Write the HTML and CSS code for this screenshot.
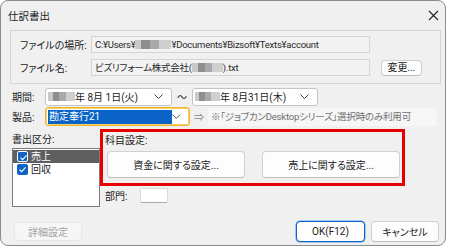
FILE: index.html
```html
<!DOCTYPE html>
<html lang="ja">
<head>
    <meta charset="UTF-8">
    <title>仕訳書出</title>
    <link rel="stylesheet" href="styles.css">
</head>
<body>
    <div class="window">
        <div class="titlebar">
            <span class="title">仕訳書出</span>
            <svg class="close" width="11" height="11" viewBox="0 0 11 11">
                <path d="M1 1 L10 10 M10 1 L1 10" stroke="#222" stroke-width="1.1" fill="none"/>
            </svg>
        </div>

        <div class="filebox">
            <div class="file-row">
                <span class="file-label">ファイルの場所:</span>
                <div class="field">C:¥Users¥<span class="mosaic m1"></span>¥Documents¥Bizsoft¥Texts¥account</div>
            </div>
            <div class="file-row">
                <span class="file-label">ファイル名:</span>
                <div class="field">ビズリフォーム株式会社(<span class="mosaic m2"></span>).txt</div>
                <button class="btn small">変更...</button>
            </div>
        </div>

        <div class="row period">
            <span class="row-label">期間:</span>
            <div class="combo c-from"><span class="mosaic m3"></span>年 8月 1日(火)<svg class="chev" width="9" height="5" viewBox="0 0 9 5"><path d="M0.5 0.5 L4.5 4.5 L8.5 0.5" stroke="#444" fill="none"/></svg></div>
            <span class="tilde">〜</span>
            <div class="combo c-to"><span class="mosaic m4"></span>年 8月31日(木)<svg class="chev" width="9" height="5" viewBox="0 0 9 5"><path d="M0.5 0.5 L4.5 4.5 L8.5 0.5" stroke="#444" fill="none"/></svg></div>
        </div>

        <div class="row product">
            <span class="row-label">製品:</span>
            <div class="combo focus"><span class="selected">勘定奉行21</span><svg class="chev" width="9" height="5" viewBox="0 0 9 5"><path d="M0.5 0.5 L4.5 4.5 L8.5 0.5" stroke="#444" fill="none"/></svg></div>
            <span class="arrow">⇒</span>
            <div class="note">※「ジョブカンDesktopシリーズ」選択時のみ利用可</div>
        </div>

        <div class="main">
            <div class="left">
                <div class="list-label">書出区分:</div>
                <div class="listbox">
                    <div class="item active"><span class="check"></span>売上</div>
                    <div class="item"><span class="check"></span>回収</div>
                </div>
            </div>
            <div class="right">
                <div class="highlight">
                    <div class="kamoku-label">科目設定:</div>
                    <div class="kamoku-buttons">
                        <button class="btn big">資金に関する設定...</button>
                        <button class="btn big">売上に関する設定...</button>
                    </div>
                </div>
                <div class="dept">
                    <span class="dept-label">部門:</span>
                    <div class="dept-input"></div>
                </div>
            </div>
        </div>

        <div class="footer">
            <button class="btn detail" disabled>詳細設定</button>
            <button class="btn ok">OK(F12)</button>
            <button class="btn cancel">キャンセル</button>
        </div>
    </div>
</body>
</html>
```

FILE: styles.css
```css
body {
    margin: 0;
    background-color: #ffffff;
    font-family: Roboto, 'Noto Sans CJK JP', sans-serif;
    font-size: 10px;
    font-feature-settings: "palt";
    color: #1b1b1b;
}
.window {
    box-sizing: border-box;
    width: 446px;
    height: 246px;
    border: 1px solid #8c8c8c;
    border-radius: 8px;
    background-color: #f0f0f0;
    overflow: hidden;
}
.titlebar {
    height: 29px;
    display: flex;
    align-items: center;
    justify-content: space-between;
    padding: 0 6px 0 7px;
}
.title {
    font-size: 10.5px;
}
.filebox {
    box-sizing: border-box;
    margin-left: 9px;
    width: 431px;
    height: 54px;
    border: 1px solid #d6d6d6;
    padding: 5px 0 0 9px;
}
.file-row {
    display: flex;
    align-items: center;
    height: 17px;
    margin-bottom: 6px;
}
.file-label {
    width: 71px;
}
.field {
    box-sizing: border-box;
    width: 279px;
    height: 17px;
    border: 1px solid #d4d4d4;
    background-color: #f2f2f2;
    padding-left: 3px;
    font-size: 9.5px;
    letter-spacing: -0.25px;
    line-height: 15px;
    white-space: nowrap;
    overflow: hidden;
    color: #2a2a2a;
}
.mosaic {
    display: inline-block;
    height: 9px;
    vertical-align: -1px;
    background: linear-gradient(90deg, #c9c9c9 0 18%, #8e8e8e 18% 42%, #a9a9a9 42% 66%, #cfcfcf 66% 100%);
}
.m1 { width: 36px; }
.m2 { width: 31px; }
.m3 { width: 27px; }
.m4 { width: 25px; }
.btn {
    box-sizing: border-box;
    font-family: inherit;
    font-size: 10px;
    font-feature-settings: "palt";
    color: #1b1b1b;
    background-color: #fdfdfd;
    border: 1px solid #d0d0d0;
    border-bottom-color: #bdbdbd;
    border-radius: 4px;
    padding: 0;
}
.btn.small {
    width: 41px;
    height: 16px;
    margin-left: 11px;
    line-height: 14px;
}
.row {
    display: flex;
    align-items: center;
    height: 19px;
    padding-left: 11px;
}
.period {
    margin-top: 3px;
}
.product {
    margin-top: 1px;
}
.row-label {
    width: 33px;
}
.combo {
    box-sizing: border-box;
    height: 18px;
    background-color: #ffffff;
    border: 1px solid #c4c4c4;
    border-radius: 3px;
    display: flex;
    align-items: center;
    padding: 0 8px 0 2px;
    white-space: nowrap;
}
.combo .chev {
    margin-left: auto;
}
.c-from {
    width: 127px;
}
.c-to {
    width: 126px;
}
.tilde {
    width: 20px;
    text-align: center;
}
.combo.focus {
    width: 145px;
    height: 19px;
    border: 1px solid #f0b429;
    box-shadow: inset 0 0 0 1px #f6cf6e;
    padding-left: 2px;
}
.selected {
    background-color: #0a64c8;
    color: #ffffff;
    width: 129px;
    height: 14px;
    line-height: 14px;
    padding-left: 1px;
}
.arrow {
    width: 18px;
    text-align: center;
    color: #8a8a8a;
}
.note {
    box-sizing: border-box;
    width: 229px;
    height: 18px;
    background-color: #f6f6f6;
    border-radius: 3px;
    line-height: 18px;
    padding-left: 3px;
    font-size: 9.5px;
    letter-spacing: -0.2px;
    color: #707070;
    white-space: nowrap;
}
.main {
    display: flex;
    height: 78px;
    margin-top: 3px;
}
.left {
    margin-left: 11px;
    width: 88px;
}
.list-label {
    height: 19px;
    padding-top: 3px;
    box-sizing: border-box;
    line-height: 16px;
}
.listbox {
    box-sizing: border-box;
    height: 59px;
    width: 88px;
    background-color: #ffffff;
    border: 1px solid #7c7c7c;
    padding-top: 1px;
}
.item {
    display: flex;
    align-items: center;
    height: 13px;
    line-height: 13px;
    padding-left: 4px;
    gap: 3px;
}
.item.active {
    background-color: #5f5f5f;
    color: #ffffff;
}
.check {
    box-sizing: border-box;
    width: 11px;
    height: 11px;
    border-radius: 2px;
    background-color: #1062c4;
    background-image: url("data:image/svg+xml,%3Csvg xmlns='http://www.w3.org/2000/svg' width='11' height='11'%3E%3Cpath d='M2.5 5.6 L4.6 7.6 L8.6 3.4' stroke='white' stroke-width='1.1' fill='none'/%3E%3C/svg%3E");
}
.item.active .check {
    border: 1px solid #ffffff;
}
.right {
    margin-left: 0;
}
.highlight {
    box-sizing: border-box;
    width: 305px;
    height: 57px;
    border: 3px solid #e60000;
    padding: 2px 0 0 2px;
}
.kamoku-label {
    height: 17px;
    line-height: 14px;
}
.kamoku-buttons {
    display: flex;
    gap: 17px;
    padding-left: 2px;
}
.btn.big {
    width: 138px;
    height: 27px;
}
.dept {
    display: flex;
    align-items: center;
    height: 16px;
    margin-top: 1px;
    padding-left: 5px;
}
.dept-label {
    width: 35px;
}
.dept-input {
    box-sizing: border-box;
    width: 28px;
    height: 15px;
    background-color: #ffffff;
    border: 1px solid #dadada;
    border-bottom-color: #a8a8a8;
    border-radius: 2px;
}
.footer {
    display: flex;
    align-items: center;
    height: 21px;
    margin-top: 14px;
    padding-left: 13px;
}
.btn.detail {
    width: 68px;
    height: 19px;
    background-color: #f6f6f6;
    border-color: #e6e6e6;
    color: #a2a2a2;
}
.btn.ok {
    width: 69px;
    height: 21px;
    margin-left: auto;
    border: 1px solid #0a64c8;
    box-shadow: inset 0 0 0 1px #ffffff, 0 0 0 0.5px #5a9be0;
}
.btn.cancel {
    width: 68px;
    height: 21px;
    margin-left: 6px;
    margin-right: 6px;
}
```
